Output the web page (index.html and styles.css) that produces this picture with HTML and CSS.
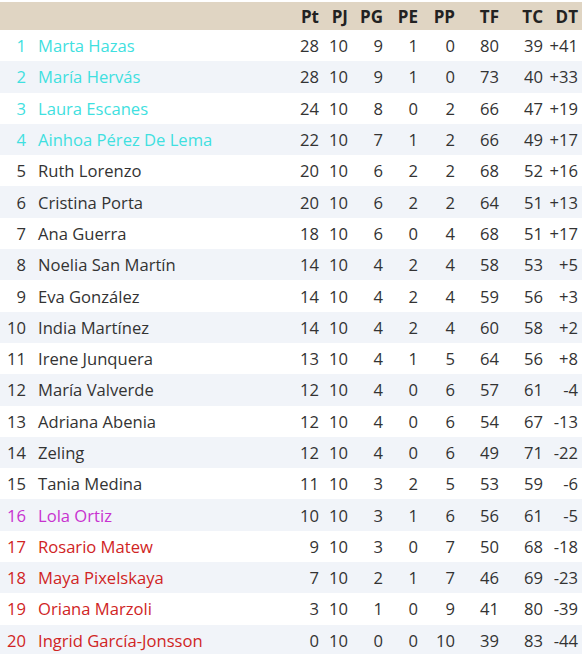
FILE: index.html
```html
<!DOCTYPE html>
<html lang="es">
<head>
<meta charset="utf-8">
<title>Clasificación</title>
<link rel="stylesheet" href="styles.css">
</head>
<body>
<div class="table">
  <div class="row head">
    <div class="c rank"></div><div class="c name"></div>
    <div class="c n">Pt</div><div class="c n">PJ</div><div class="c n">PG</div><div class="c n">PE</div><div class="c n">PP</div><div class="c n">TF</div><div class="c n">TC</div><div class="c n">DT</div>
  </div>
  <div class="row up"><div class="c rank">1</div><div class="c name">Marta Hazas</div><div class="c n">28</div><div class="c n">10</div><div class="c n">9</div><div class="c n">1</div><div class="c n">0</div><div class="c n">80</div><div class="c n">39</div><div class="c n">+41</div></div>
  <div class="row up"><div class="c rank">2</div><div class="c name">María Hervás</div><div class="c n">28</div><div class="c n">10</div><div class="c n">9</div><div class="c n">1</div><div class="c n">0</div><div class="c n">73</div><div class="c n">40</div><div class="c n">+33</div></div>
  <div class="row up"><div class="c rank">3</div><div class="c name">Laura Escanes</div><div class="c n">24</div><div class="c n">10</div><div class="c n">8</div><div class="c n">0</div><div class="c n">2</div><div class="c n">66</div><div class="c n">47</div><div class="c n">+19</div></div>
  <div class="row up"><div class="c rank">4</div><div class="c name">Ainhoa Pérez De Lema</div><div class="c n">22</div><div class="c n">10</div><div class="c n">7</div><div class="c n">1</div><div class="c n">2</div><div class="c n">66</div><div class="c n">49</div><div class="c n">+17</div></div>
  <div class="row"><div class="c rank">5</div><div class="c name">Ruth Lorenzo</div><div class="c n">20</div><div class="c n">10</div><div class="c n">6</div><div class="c n">2</div><div class="c n">2</div><div class="c n">68</div><div class="c n">52</div><div class="c n">+16</div></div>
  <div class="row"><div class="c rank">6</div><div class="c name">Cristina Porta</div><div class="c n">20</div><div class="c n">10</div><div class="c n">6</div><div class="c n">2</div><div class="c n">2</div><div class="c n">64</div><div class="c n">51</div><div class="c n">+13</div></div>
  <div class="row"><div class="c rank">7</div><div class="c name">Ana Guerra</div><div class="c n">18</div><div class="c n">10</div><div class="c n">6</div><div class="c n">0</div><div class="c n">4</div><div class="c n">68</div><div class="c n">51</div><div class="c n">+17</div></div>
  <div class="row"><div class="c rank">8</div><div class="c name">Noelia San Martín</div><div class="c n">14</div><div class="c n">10</div><div class="c n">4</div><div class="c n">2</div><div class="c n">4</div><div class="c n">58</div><div class="c n">53</div><div class="c n">+5</div></div>
  <div class="row"><div class="c rank">9</div><div class="c name">Eva González</div><div class="c n">14</div><div class="c n">10</div><div class="c n">4</div><div class="c n">2</div><div class="c n">4</div><div class="c n">59</div><div class="c n">56</div><div class="c n">+3</div></div>
  <div class="row"><div class="c rank">10</div><div class="c name">India Martínez</div><div class="c n">14</div><div class="c n">10</div><div class="c n">4</div><div class="c n">2</div><div class="c n">4</div><div class="c n">60</div><div class="c n">58</div><div class="c n">+2</div></div>
  <div class="row"><div class="c rank">11</div><div class="c name">Irene Junquera</div><div class="c n">13</div><div class="c n">10</div><div class="c n">4</div><div class="c n">1</div><div class="c n">5</div><div class="c n">64</div><div class="c n">56</div><div class="c n">+8</div></div>
  <div class="row"><div class="c rank">12</div><div class="c name">María Valverde</div><div class="c n">12</div><div class="c n">10</div><div class="c n">4</div><div class="c n">0</div><div class="c n">6</div><div class="c n">57</div><div class="c n">61</div><div class="c n">-4</div></div>
  <div class="row"><div class="c rank">13</div><div class="c name">Adriana Abenia</div><div class="c n">12</div><div class="c n">10</div><div class="c n">4</div><div class="c n">0</div><div class="c n">6</div><div class="c n">54</div><div class="c n">67</div><div class="c n">-13</div></div>
  <div class="row"><div class="c rank">14</div><div class="c name">Zeling</div><div class="c n">12</div><div class="c n">10</div><div class="c n">4</div><div class="c n">0</div><div class="c n">6</div><div class="c n">49</div><div class="c n">71</div><div class="c n">-22</div></div>
  <div class="row"><div class="c rank">15</div><div class="c name">Tania Medina</div><div class="c n">11</div><div class="c n">10</div><div class="c n">3</div><div class="c n">2</div><div class="c n">5</div><div class="c n">53</div><div class="c n">59</div><div class="c n">-6</div></div>
  <div class="row mid"><div class="c rank">16</div><div class="c name">Lola Ortiz</div><div class="c n">10</div><div class="c n">10</div><div class="c n">3</div><div class="c n">1</div><div class="c n">6</div><div class="c n">56</div><div class="c n">61</div><div class="c n">-5</div></div>
  <div class="row down"><div class="c rank">17</div><div class="c name">Rosario Matew</div><div class="c n">9</div><div class="c n">10</div><div class="c n">3</div><div class="c n">0</div><div class="c n">7</div><div class="c n">50</div><div class="c n">68</div><div class="c n">-18</div></div>
  <div class="row down"><div class="c rank">18</div><div class="c name">Maya Pixelskaya</div><div class="c n">7</div><div class="c n">10</div><div class="c n">2</div><div class="c n">1</div><div class="c n">7</div><div class="c n">46</div><div class="c n">69</div><div class="c n">-23</div></div>
  <div class="row down"><div class="c rank">19</div><div class="c name">Oriana Marzoli</div><div class="c n">3</div><div class="c n">10</div><div class="c n">1</div><div class="c n">0</div><div class="c n">9</div><div class="c n">41</div><div class="c n">80</div><div class="c n">-39</div></div>
  <div class="row down"><div class="c rank">20</div><div class="c name">Ingrid García-Jonsson</div><div class="c n">0</div><div class="c n">10</div><div class="c n">0</div><div class="c n">0</div><div class="c n">10</div><div class="c n">39</div><div class="c n">83</div><div class="c n">-44</div></div>
</div>
</body>
</html>
```

FILE: styles.css
```css
html, body {
  margin: 0;
  padding: 0;
  background: #ffffff;
}
body {
  padding-top: 2px;
  font-family: "Open Sans", "Noto Sans", sans-serif;
  font-size: 16.6px;
  color: #333333;
}
.table {
  width: 582px;
}
.row {
  display: grid;
  grid-template-columns: 26px 264px 33px 29px 35px 35px 37px 44px 44px 35px;
  height: 31.3px;
  align-items: center;
}
.row:nth-child(odd) {
  background: #f1f4f9;
}
.row.head {
  height: 28px;
  background: #e0d5c3;
  font-weight: 700;
  font-size: 17px;
  color: #222222;
}
.c {
  white-space: nowrap;
}
.rank {
  text-align: right;
}
.name {
  padding-left: 12px;
}
.n {
  text-align: right;
  padding-right: 4px;
}
.up .rank, .up .name {
  color: #3fe0e0;
}
.mid .rank, .mid .name {
  color: #c832d0;
}
.down .rank, .down .name {
  color: #d02424;
}
```
